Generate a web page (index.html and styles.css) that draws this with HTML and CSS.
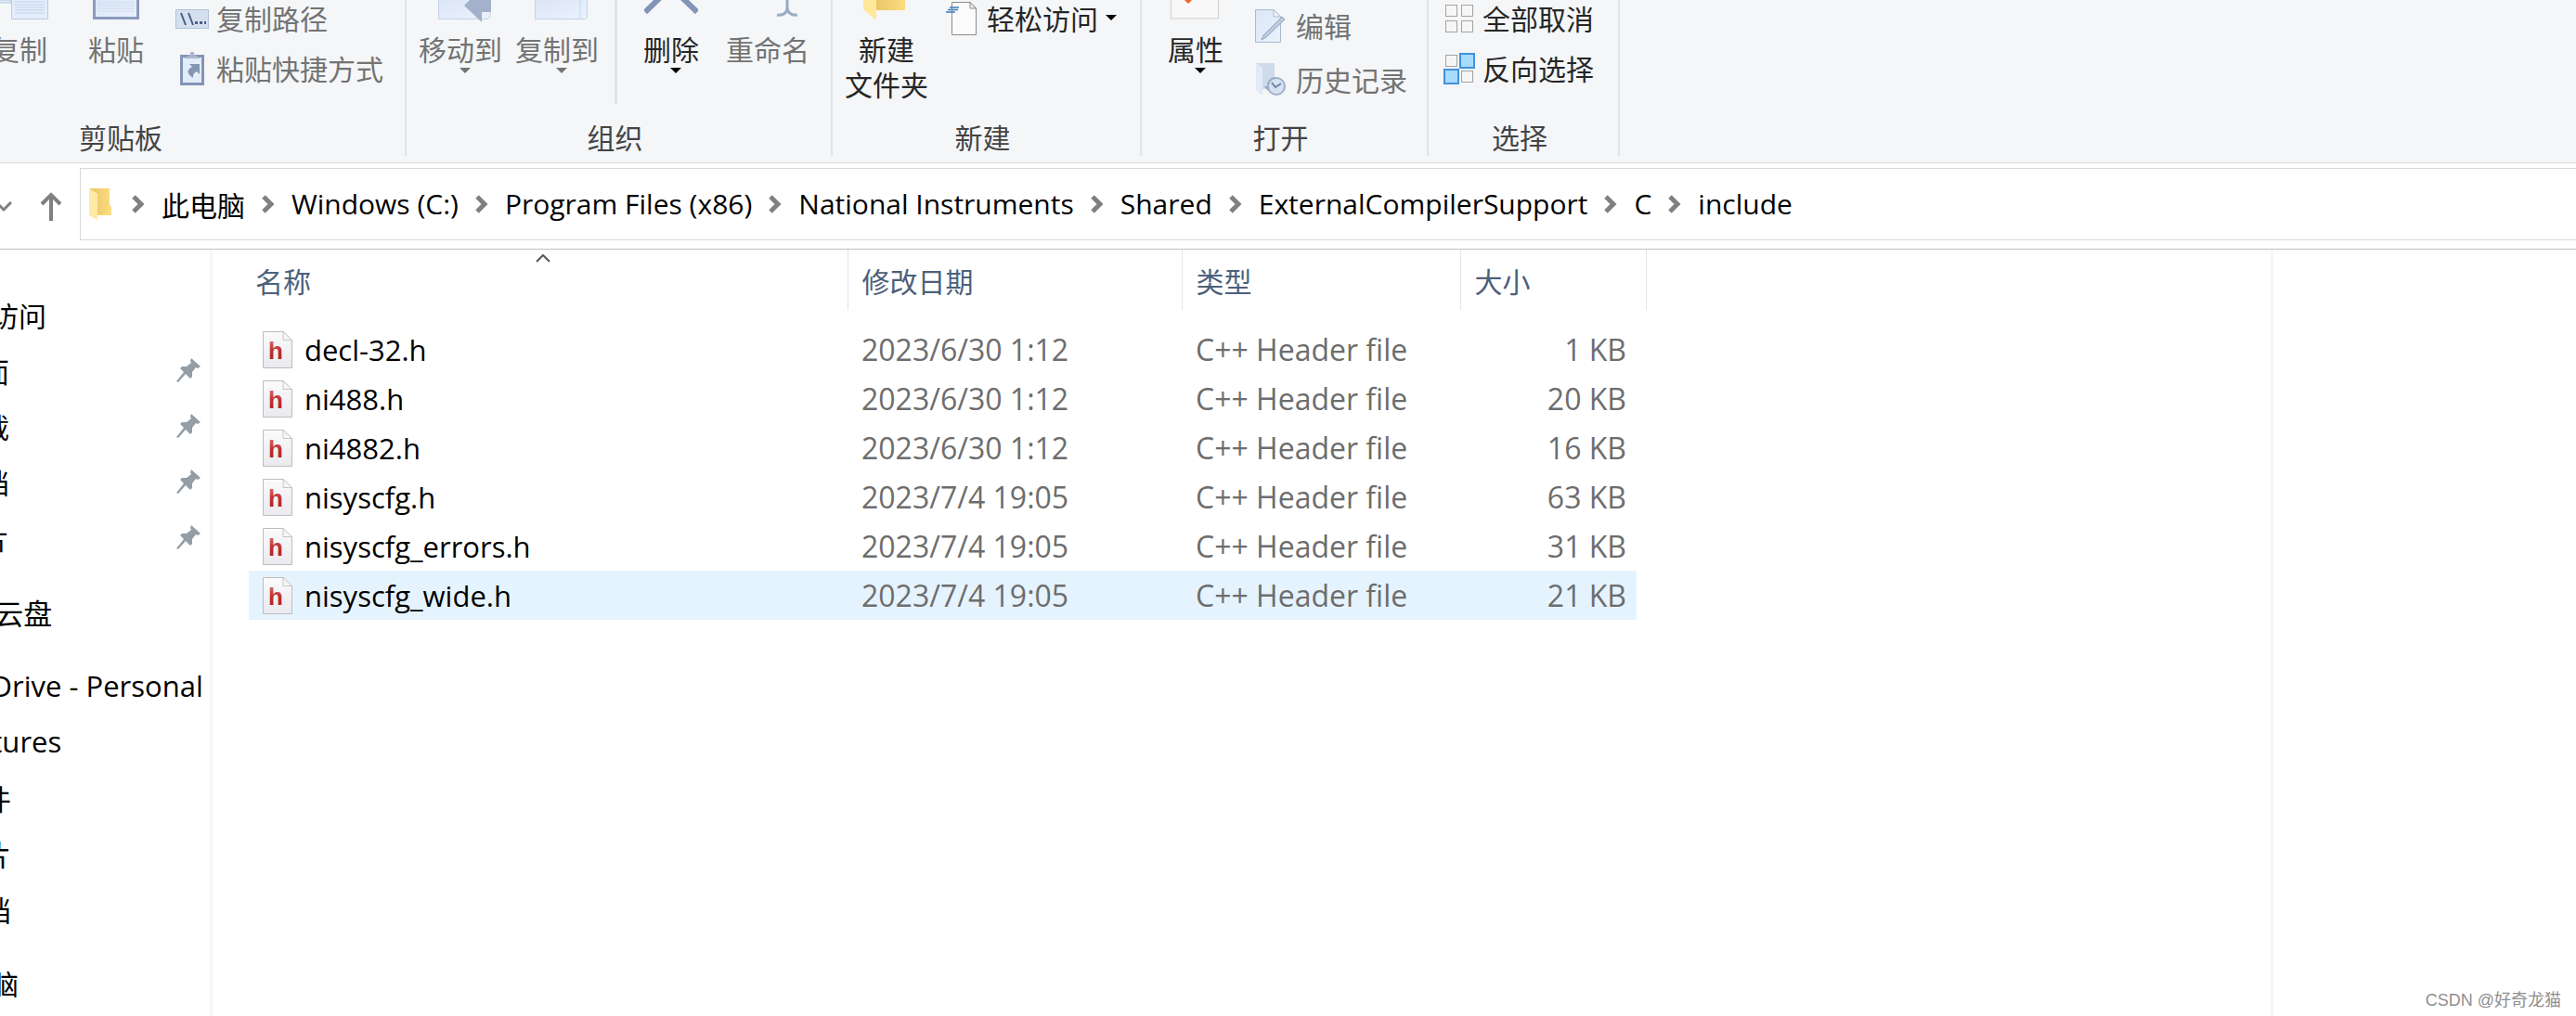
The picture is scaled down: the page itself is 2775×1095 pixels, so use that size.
FILE: index.html
```
<!DOCTYPE html>
<html lang="zh-CN">
<head>
    <meta charset="UTF-8">
    <meta name="viewport" content="width=device-width, initial-scale=1.0">
    <title>include</title>
    <link rel="stylesheet" href="styles.css">
</head>
<body>
    <!-- shared icons -->
    <svg class="defs" width="0" height="0">
        <linearGradient id="paper" x1="0" y1="0" x2="0" y2="1">
            <stop offset="0" stop-color="#fbfbfb"/>
            <stop offset="1" stop-color="#e9e9ef"/>
        </linearGradient>
        <linearGradient id="red" x1="0" y1="0" x2="0" y2="1">
            <stop offset="0" stop-color="#d98080"/>
            <stop offset="0.5" stop-color="#bf2f2f"/>
            <stop offset="1" stop-color="#a81e1e"/>
        </linearGradient>
        <linearGradient id="gold" x1="0" y1="0" x2="1" y2="0">
            <stop offset="0" stop-color="#e9c767"/>
            <stop offset="1" stop-color="#fbdc80"/>
        </linearGradient>
        <linearGradient id="sheet" x1="0" y1="0" x2="1" y2="1">
            <stop offset="0" stop-color="#dbe5f5"/>
            <stop offset="1" stop-color="#eaf2fd"/>
        </linearGradient>
        <symbol id="hfile" viewBox="0 0 32 40">
            <path d="M.5.5H22L31.500 9.500V39.500H.5Z" fill="url(#paper)" stroke="#bdbdbd"/>
            <path d="M22 .5V9.500H31.500Z" fill="#f6f6f6" stroke="#c6c6c6"/>
            <text x="6" y="30" class="h-letter">h</text>
        </symbol>
        <symbol id="pin" viewBox="0 0 26 26">
            <path d="M16 0L26 9L23 11L21 10L17 15V20L15 22L10 17L2 26L0 25L8 15L4 11L6 9H11L16 5L15 3Z" fill="#939ea6"/>
        </symbol>
        <symbol id="chev" viewBox="0 0 14 20">
            <path d="M2 2L10 10L2 18" fill="none" stroke="#808080" stroke-width="5"/>
        </symbol>
        <symbol id="caret" viewBox="0 0 12 6">
            <path d="M0 0H12L6 6Z" fill="currentColor"/>
        </symbol>
        <symbol id="box" viewBox="0 0 14 14">
            <rect x=".5" y=".5" width="12" height="12" fill="#f6f6f6" stroke="#a3a3a3"/>
        </symbol>
    </svg>

    <div class="ribbon">
        <div class="group clipboard">
            <div class="tools">
                <button class="big" disabled>
                    <svg width="62" height="33">
                        <path d="M0 0H22V3H0Z" fill="#e3ecf9" stroke="#b4c5de"/>
                        <path d="M22.500-1V20.500H61.500V-1Z" fill="#e4edfa" stroke="#b9cbe4"/>
                        <path d="M26 2H58M26 5H58M26 8H58M26 11H58M26 14H58" stroke="#c3d3ea"/>
                    </svg>
                    <span>复制</span>
                </button>
                <button class="big" disabled>
                    <svg width="50" height="33">
                        <path d="M1.500-2V19.500H48.500V-2" fill="url(#sheet)" stroke="#8a9cbc" stroke-width="3"/>
                        <path d="M5 3H45M5 6H45M5 9H45M5 12H45" stroke="#cfdcf0"/>
                    </svg>
                    <span>粘贴</span>
                </button>
                <div class="stack">
                    <button class="small" disabled>
                        <svg width="40" height="38">
                            <rect x="4.500" y="10.500" width="35" height="20" fill="#d5e0ee" stroke="#b2c2d8"/>
                            <path d="M10 14L15 27M18 14L23 27" stroke="#4c5d86" stroke-width="2"/>
                            <path d="M25 23H28V26H25ZM30 23H33V26H30ZM35 23H37V26H35Z" fill="#4c5d86"/>
                        </svg>
                        <span>复制路径</span>
                    </button>
                    <button class="small" disabled>
                        <svg width="40" height="38">
                            <rect x="10.500" y="6.500" width="23" height="30" fill="#e3ecfa" stroke="#8495b4" stroke-width="3"/>
                            <path d="M14 8L20 5V2H24V5L30 8V9H14Z" fill="#a8b6cf"/>
                            <path d="M19 15H30V26L27 23C23 25 23 27 23 30C16 25 16 21 22 18Z" fill="#8495b4"/>
                        </svg>
                        <span>粘贴快捷方式</span>
                    </button>
                </div>
            </div>
            <div class="label">剪贴板</div>
        </div>

        <div class="group organize">
            <div class="tools">
                <button class="big" disabled>
                    <svg width="66" height="33">
                        <path d="M9.500-1V20.500H63L65 18V-1Z" fill="url(#sheet)" stroke="#c5d3e8"/>
                        <path d="M75 0V13H56V24L37 6L43 0Z" fill="#a3b1ca"/>
                    </svg>
                    <span>移动到</span>
                    <svg class="caret" width="12" height="6"><use href="#caret"/></svg>
                </button>
                <button class="big" disabled>
                    <svg width="66" height="33">
                        <path d="M9.500-1V20.500H64L65.500 19V-1Z" fill="url(#sheet)" stroke="#c5d3e8"/>
                        <path d="M58 0V20" stroke="#c9d6ea"/>
                    </svg>
                    <span>复制到</span>
                    <svg class="caret" width="12" height="6"><use href="#caret"/></svg>
                </button>
                <div class="line"></div>
                <button class="big">
                    <svg width="58" height="33">
                        <path d="M1 13L29-14L57 13" fill="none" stroke="#8294b8" stroke-width="6"/>
                    </svg>
                    <span>删除</span>
                    <svg class="caret" width="12" height="6"><use href="#caret"/></svg>
                </button>
                <button class="big" disabled>
                    <svg width="64" height="33">
                        <path d="M53-1V8C53 13 50 17 42 16M53 8C53 13 57 17 64 16" fill="none" stroke="#9aaac6" stroke-width="3"/>
                    </svg>
                    <span>重命名</span>
                </button>
            </div>
            <div class="label">组织</div>
        </div>

        <div class="group new">
            <div class="tools">
                <button class="big">
                    <svg width="50" height="33">
                        <path d="M13 0H45V11H13Z" fill="url(#gold)"/>
                        <path d="M0 0H14V22L0 10Z" fill="#ffe79c"/>
                    </svg>
                    <span>新建<br>文件夹</span>
                </button>
                <div class="stack">
                    <button class="small">
                        <svg width="40" height="38">
                            <path d="M10.500 2.500H30L36.500 9V37.500H10.500Z" fill="#fbfbfb" stroke="#8b8b8b"/>
                            <path d="M30 2.500V9H36.500Z" fill="#eee" stroke="#8b8b8b"/>
                            <path d="M8 8H18M6 10.500H17M4 13H14" stroke="#3f7db8" stroke-width="1.500"/>
                        </svg>
                        <span>轻松访问</span>
                        <svg class="side-caret" width="12" height="6"><use href="#caret"/></svg>
                    </button>
                </div>
            </div>
            <div class="label">新建</div>
        </div>

        <div class="group open">
            <div class="tools">
                <button class="big">
                    <svg width="54" height="33">
                        <rect x=".5" y="-8" width="51" height="28" fill="#f8f8f8" stroke="#cfcfcf"/>
                        <path d="M14-1L19 4L24-1Z" fill="#f0622a"/>
                    </svg>
                    <span>属性</span>
                    <svg class="caret" width="12" height="6"><use href="#caret"/></svg>
                </button>
                <div class="stack lower">
                    <button class="small" disabled>
                        <svg width="40" height="38">
                            <path d="M4.500 2.500H24L31.500 10V37.500H4.500Z" fill="url(#sheet)" stroke="#a9b9d3"/>
                            <path d="M24 2.500V10H31.500Z" fill="#f0f5fc" stroke="#a9b9d3"/>
                            <path d="M11 35L13 30L33 10L36 13L16 32Z" fill="#bccadf" stroke="#94a6c4"/>
                        </svg>
                        <span>编辑</span>
                    </button>
                    <button class="small" disabled>
                        <svg width="40" height="38">
                            <path d="M5 2H25V30H5Z" fill="#cfdaea"/>
                            <path d="M5 2L12 7V37L5 31Z" fill="#e1eaf6"/>
                            <path d="M14 27H21L18 32ZM17 27C17 20 22 17 27 17" fill="#8fa1c0"/>
                            <circle cx="27" cy="27" r="9" fill="#d7e2f1" stroke="#a0b1cc" stroke-width="2"/>
                            <path d="M22 23L26 28L32 24" fill="none" stroke="#6e82a6" stroke-width="2"/>
                        </svg>
                        <span>历史记录</span>
                    </button>
                </div>
            </div>
            <div class="label">打开</div>
        </div>

        <div class="group select">
            <div class="tools">
                <div class="stack">
                    <button class="small">
                        <svg width="40" height="38">
                            <use href="#box" x="8" y="5" width="14" height="14"/>
                            <use href="#box" x="25" y="5" width="14" height="14"/>
                            <use href="#box" x="8" y="22" width="14" height="14"/>
                            <use href="#box" x="25" y="22" width="14" height="14"/>
                        </svg>
                        <span>全部取消</span>
                    </button>
                    <button class="small">
                        <svg width="40" height="38">
                            <use href="#box" x="8" y="5" width="14" height="14"/>
                            <rect x="24" y="4" width="15" height="15" fill="#a9daff" stroke="#3f93da" stroke-width="2"/>
                            <rect x="7" y="21" width="15" height="15" fill="#a9daff" stroke="#3f93da" stroke-width="2"/>
                            <use href="#box" x="25" y="22" width="14" height="14"/>
                        </svg>
                        <span>反向选择</span>
                    </button>
                </div>
            </div>
            <div class="label">选择</div>
        </div>
    </div>

    <div class="address">
        <div class="nav-buttons">
            <svg width="14" height="12"><path d="M-4 1L4 9L12 1" fill="none" stroke="#808080" stroke-width="3"/></svg>
            <svg width="24" height="32"><path d="M12 31V3M2 13L12 3L22 13" fill="none" stroke="#808080" stroke-width="4"/></svg>
        </div>
        <div class="path">
            <svg class="folder" width="24" height="36">
                <path d="M1 1H22V19L24 21V30H6Z" fill="url(#gold)"/>
                <path d="M0 1L9 7V35L0 30Z" fill="#ffe9a6"/>
            </svg>
            <svg width="14" height="20"><use href="#chev"/></svg>
            <a href="#">此电脑</a>
            <svg width="14" height="20"><use href="#chev"/></svg>
            <a href="#">Windows (C:)</a>
            <svg width="14" height="20"><use href="#chev"/></svg>
            <a href="#">Program Files (x86)</a>
            <svg width="14" height="20"><use href="#chev"/></svg>
            <a href="#">National Instruments</a>
            <svg width="14" height="20"><use href="#chev"/></svg>
            <a href="#">Shared</a>
            <svg width="14" height="20"><use href="#chev"/></svg>
            <a href="#">ExternalCompilerSupport</a>
            <svg width="14" height="20"><use href="#chev"/></svg>
            <a href="#">C</a>
            <svg width="14" height="20"><use href="#chev"/></svg>
            <a href="#">include</a>
        </div>
    </div>

    <div class="main">
        <div class="sidebar">
            <ul>
                <li>快速访问</li>
                <li class="sub">桌面<svg width="26" height="26"><use href="#pin"/></svg></li>
                <li class="sub">下载<svg width="26" height="26"><use href="#pin"/></svg></li>
                <li class="sub">文档<svg width="26" height="26"><use href="#pin"/></svg></li>
                <li class="sub">图片<svg width="26" height="26"><use href="#pin"/></svg></li>
            </ul>
            <ul class="cloud">
                <li>WPS云盘</li>
            </ul>
            <ul class="cloud">
                <li>OneDrive - Personal</li>
                <li class="sub">Pictures</li>
                <li class="sub">附件</li>
                <li class="sub">图片</li>
                <li class="sub">文档</li>
            </ul>
            <ul>
                <li>此电脑</li>
            </ul>
        </div>

        <div class="files">
            <table>
                <colgroup>
                    <col class="col-name">
                    <col class="col-date">
                    <col class="col-type">
                    <col class="col-size">
                    <col class="col-end">
                </colgroup>
                <thead>
                    <tr>
                        <th class="name">名称<svg class="sort" width="16" height="9"><path d="M1 8L8 1L15 8" fill="none" stroke="#555" stroke-width="2"/></svg></th>
                        <th>修改日期</th>
                        <th>类型</th>
                        <th colspan="2">大小</th>
                    </tr>
                </thead>
                <tbody>
                    <tr>
                        <td class="name"><svg width="32" height="40"><use href="#hfile"/></svg>decl-32.h</td>
                        <td>2023/6/30 1:12</td>
                        <td>C++ Header file</td>
                        <td class="kb">1 KB</td>
                    </tr>
                    <tr>
                        <td class="name"><svg width="32" height="40"><use href="#hfile"/></svg>ni488.h</td>
                        <td>2023/6/30 1:12</td>
                        <td>C++ Header file</td>
                        <td class="kb">20 KB</td>
                    </tr>
                    <tr>
                        <td class="name"><svg width="32" height="40"><use href="#hfile"/></svg>ni4882.h</td>
                        <td>2023/6/30 1:12</td>
                        <td>C++ Header file</td>
                        <td class="kb">16 KB</td>
                    </tr>
                    <tr>
                        <td class="name"><svg width="32" height="40"><use href="#hfile"/></svg>nisyscfg.h</td>
                        <td>2023/7/4 19:05</td>
                        <td>C++ Header file</td>
                        <td class="kb">63 KB</td>
                    </tr>
                    <tr>
                        <td class="name"><svg width="32" height="40"><use href="#hfile"/></svg>nisyscfg_errors.h</td>
                        <td>2023/7/4 19:05</td>
                        <td>C++ Header file</td>
                        <td class="kb">31 KB</td>
                    </tr>
                    <tr class="active">
                        <td class="name"><svg width="32" height="40"><use href="#hfile"/></svg>nisyscfg_wide.h</td>
                        <td>2023/7/4 19:05</td>
                        <td>C++ Header file</td>
                        <td class="kb">21 KB</td>
                    </tr>
                </tbody>
            </table>
        </div>

        <div class="preview"></div>
    </div>

    <div class="watermark">CSDN @好奇龙猫</div>
</body>
</html>
```
FILE: styles.css
```
* {
    box-sizing: border-box;
    margin: 0;
    padding: 0;
}
body {
    display: flex;
    flex-direction: column;
    min-height: 100vh;
    overflow-x: hidden;
    background: #fff;
    color: #000;
    font-family: "Open Sans", "Noto Sans CJK SC", sans-serif;
    font-size: 30px;
}
svg {
    flex: none;
}
.defs {
    position: absolute;
}

/* ribbon */
.ribbon {
    display: flex;
    background: #f4f6f8;
    border-bottom: 1px solid #d9dbdd;
    height: 176px;
    font-family: "Noto Sans CJK SC", sans-serif;
}
.group {
    flex: none;
    display: flex;
    flex-direction: column;
    height: 168px;
    border-right: 2px solid #e2e3e4;
}
.tools {
    display: flex;
    height: 128px;
    padding-left: 6px;
}
.label {
    padding-right: 8px;
    line-height: 38px;
    text-align: center;
    color: #444;
}
.clipboard {
    width: 606px;
    margin-left: -168px;
}
.clipboard .tools {
    padding-left: 137px;
}
.organize {
    width: 459px;
}
.new {
    width: 333px;
}
.open {
    width: 309px;
}
.select {
    width: 206px;
}
button {
    border: none;
    background: none;
    font: inherit;
    color: #262626;
    white-space: nowrap;
}
button:disabled {
    color: #737373;
}
.big {
    display: flex;
    flex-direction: column;
    align-items: center;
    width: 104px;
    line-height: 38px;
}
.big .caret {
    margin: 2px 0 0 10px;
    color: #000;
}
.big:disabled .caret {
    color: #737373;
}
.line {
    width: 3px;
    height: 112px;
    margin: 0 6px 0 10px;
    background: #e0e2e4;
}
.stack {
    display: flex;
    flex-direction: column;
    gap: 16px;
    padding-left: 8px;
}
.stack.lower {
    gap: 20px;
    padding-top: 8px;
}
.small {
    display: flex;
    align-items: center;
    gap: 8px;
    line-height: 38px;
}
.side-caret {
    color: #000;
}
.select .stack {
    padding-left: 4px;
}

/* address bar */
.address {
    display: flex;
    align-items: center;
    height: 93px;
    padding: 5px 0 10px;
    border-bottom: 1px solid #bfbfbf;
}
.nav-buttons {
    display: flex;
    align-items: center;
    gap: 29px;
    width: 86px;
    padding-top: 6px;
}
.path {
    flex: 1;
    display: flex;
    align-items: center;
    gap: 18px;
    height: 78px;
    padding-left: 9px;
    border: 1px solid #d9d9d9;
    border-right: none;
}
.path a {
    color: #000;
    text-decoration: none;
    white-space: nowrap;
}
.folder {
    margin-right: 4px;
}

/* navigation pane */
.main {
    flex: 1;
    display: flex;
}
.sidebar {
    flex: none;
    width: 319px;
    margin-left: -90px;
    padding-top: 40px;
    border-right: 3px solid #f5f5f5;
}
.sidebar ul {
    list-style: none;
    margin-bottom: 20px;
}
.sidebar li {
    display: flex;
    justify-content: space-between;
    align-items: center;
    height: 60px;
    padding: 0 10px 0 20px;
    white-space: nowrap;
}
.sidebar .sub {
    padding-left: 40px;
}
.sidebar .cloud {
    font-size: 31px;
}

/* file list */
.files {
    flex: 1;
    padding-left: 39px;
}
table {
    width: 1505px;
    table-layout: fixed;
    border-collapse: collapse;
}
.col-name {
    width: 645px;
}
.col-date {
    width: 360px;
}
.col-type {
    width: 300px;
}
.col-size {
    width: 190px;
}
.col-end {
    width: 10px;
}
th {
    height: 65px;
    padding: 0 15px;
    border-right: 1px solid #e5e5e5;
    color: #4c607a;
    font-weight: normal;
    text-align: left;
}
th.name {
    position: relative;
    padding-left: 7px;
}
.sort {
    position: absolute;
    top: 5px;
    left: 48%;
}
tbody::before {
    content: "";
    display: block;
    height: 16px;
}
td {
    height: 53px;
    padding-left: 15px;
    color: #6d6d6d;
    font-size: 32px;
    white-space: nowrap;
}
td.name {
    display: flex;
    align-items: center;
    gap: 13px;
    color: #000;
    font-size: 31px;
}
td.kb {
    padding-right: 11px;
    text-align: right;
}
.active td {
    background: #e5f3ff;
}
.h-letter {
    font: bold 26px "Liberation Sans", sans-serif;
    fill: url(#red);
}
.preview {
    flex: none;
    width: 329px;
    border-left: 3px solid #f7f7f7;
}

.watermark {
    position: absolute;
    right: 16px;
    bottom: 6px;
    color: #8f8f8f;
    font-family: "Liberation Sans", "Noto Sans CJK SC", sans-serif;
    font-size: 18px;
}
```
